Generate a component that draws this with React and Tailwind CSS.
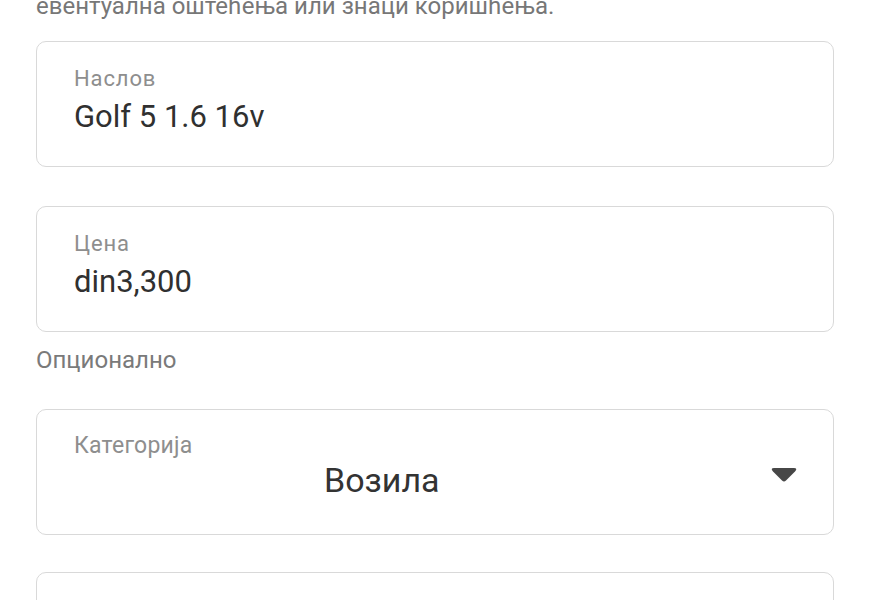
import React from "react";

function Field({ label, value, className = "" }) {
  return (
    <div className={`h-[126px] rounded-[10px] border-[1.5px] border-[#d9d9d9] bg-white pl-[37px] pt-[25px] ${className}`}>
      <div className="text-[22px] leading-[24px] tracking-[0.04em] text-[#8e8e8e]">{label}</div>
      <div className="mt-[8px] text-[31px] leading-[36px] text-[#303030]">{value}</div>
    </div>
  );
}

export default function App() {
  return (
    <div className="h-[600px] w-[870px] overflow-hidden bg-white" style={{ fontFamily: "Roboto, 'Noto Sans', sans-serif" }}>
      <div className="px-[36px]">
        <div className="mt-[-7px] text-[24px] leading-[26px] text-[#777777]">
          евентуална оштећења или знаци коришћења.
        </div>
        <Field className="mt-[22px]" label="Наслов" value="Golf 5 1.6 16v" />
        <Field className="mt-[39px]" label="Цена" value="din3,300" />
        <div className="mt-[15px] text-[24px] leading-[26px] text-[#7a7a7a]">Опционално</div>
        <div className="mt-[36px] h-[126px] rounded-[10px] border-[1.5px] border-[#d9d9d9] bg-white pl-[37px] pr-[35px] pt-[24px]">
          <div className="text-[23px] leading-[24px] tracking-[0.01em] text-[#8e8e8e]">Категорија</div>
          <div className="mt-[2px] flex items-start">
            <div className="flex-1 pl-[250px] text-[34px] leading-[40px] text-[#333333]">Возила</div>
            <svg className="mt-[5px]" width="28" height="18" viewBox="0 0 28 18">
              <path d="M4 3 Q0 3 3 6.5 L12 15.5 Q14 17.5 16 15.5 L25 6.5 Q28 3 24 3 Z" fill="#474747" />
            </svg>
          </div>
        </div>
        <div className="mt-[37px] h-[126px] rounded-[10px] border-[1.5px] border-[#d9d9d9] bg-white" />
      </div>
    </div>
  );
}
